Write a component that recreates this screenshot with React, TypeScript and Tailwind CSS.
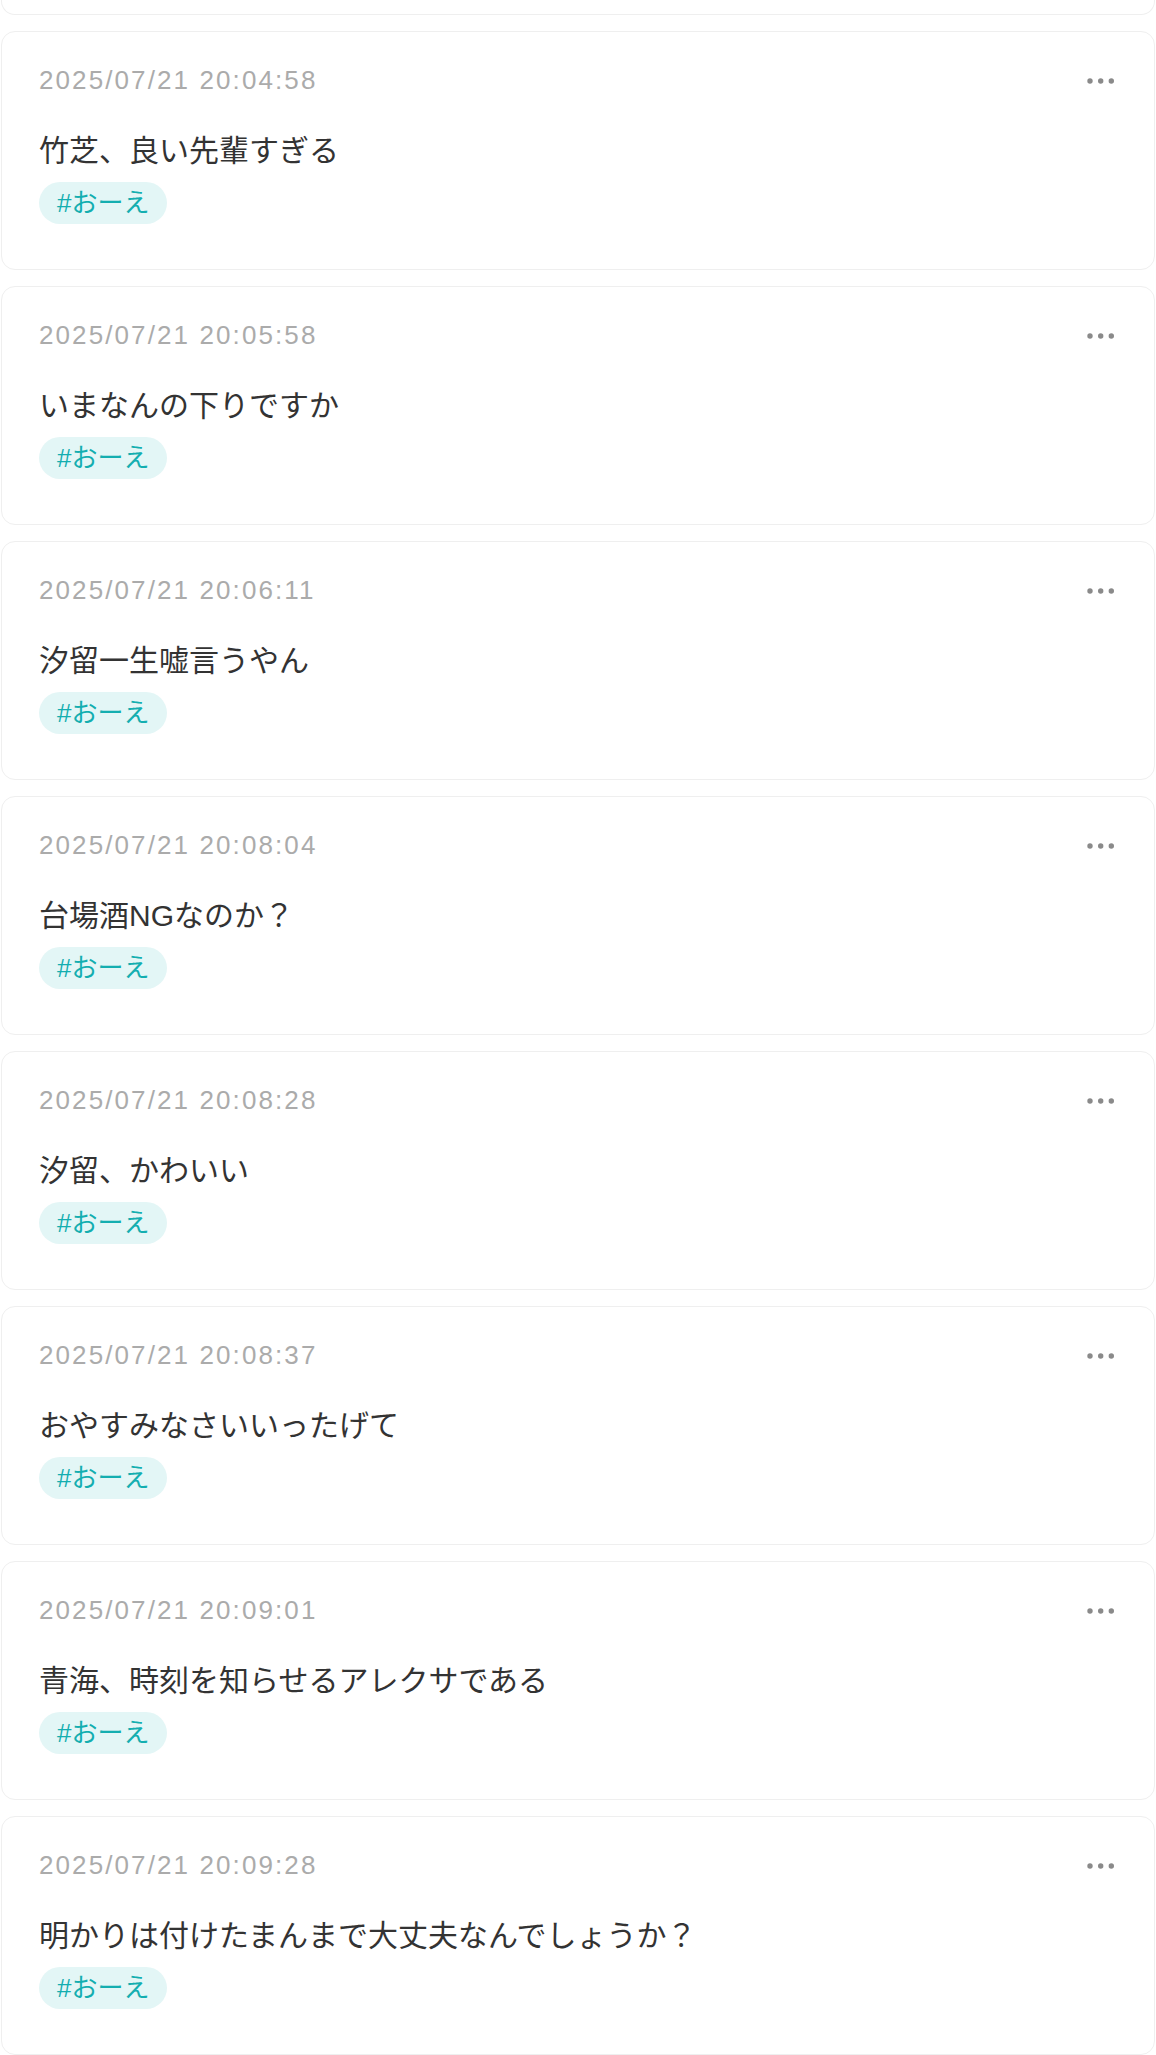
const posts = [
  { time: '2025/07/21 20:04:58', text: '竹芝、良い先輩すぎる' },
  { time: '2025/07/21 20:05:58', text: 'いまなんの下りですか' },
  { time: '2025/07/21 20:06:11', text: '汐留一生嘘言うやん' },
  { time: '2025/07/21 20:08:04', text: '台場酒NGなのか？' },
  { time: '2025/07/21 20:08:28', text: '汐留、かわいい' },
  { time: '2025/07/21 20:08:37', text: 'おやすみなさいいったげて' },
  { time: '2025/07/21 20:09:01', text: '青海、時刻を知らせるアレクサである' },
  { time: '2025/07/21 20:09:28', text: '明かりは付けたまんまで大丈夫なんでしょうか？' },
];

function MoreDots() {
  return (
    <svg width="28" height="6" viewBox="0 0 28 6" className="text-[#8a8a8a]">
      <circle cx="3" cy="3" r="2.7" fill="currentColor" />
      <circle cx="13.7" cy="3" r="2.7" fill="currentColor" />
      <circle cx="24.3" cy="3" r="2.7" fill="currentColor" />
    </svg>
  );
}

function PostCard({ time, text }: { time: string; text: string }) {
  return (
    <div className="rounded-[14px] border border-[#efefef] bg-white pl-[37px] pr-[39px] pt-[29px] h-[239px]">
      <div className="flex items-center justify-between">
        <span className="text-[26px] leading-[39px] tracking-[2.1px] text-[#ababab]">{time}</span>
        <button className="p-0">
          <MoreDots />
        </button>
      </div>
      <p className="mt-[31px] text-[30px] leading-[40px] text-[#333333]">{text}</p>
      <div className="mt-[11px] flex">
        <span className="rounded-full bg-[#e3f6f6] px-[18px] h-[42px] flex items-center text-[26px] text-[#14aeb0]">
          #おーえ
        </span>
      </div>
    </div>
  );
}

export default function App() {
  return (
    <div
      className="min-h-screen bg-white px-px"
      style={{ fontFamily: '"Liberation Sans", "Noto Sans CJK JP", sans-serif' }}
    >
      <div className="flex flex-col gap-[16px]">
        {/* tail of the previous post, scrolled off the top */}
        <div className="h-[15px] rounded-b-[14px] border border-t-0 border-[#efefef] bg-white" />
        {posts.map((p, i) => (
          <PostCard key={i} time={p.time} text={p.text} />
        ))}
      </div>
    </div>
  );
}
